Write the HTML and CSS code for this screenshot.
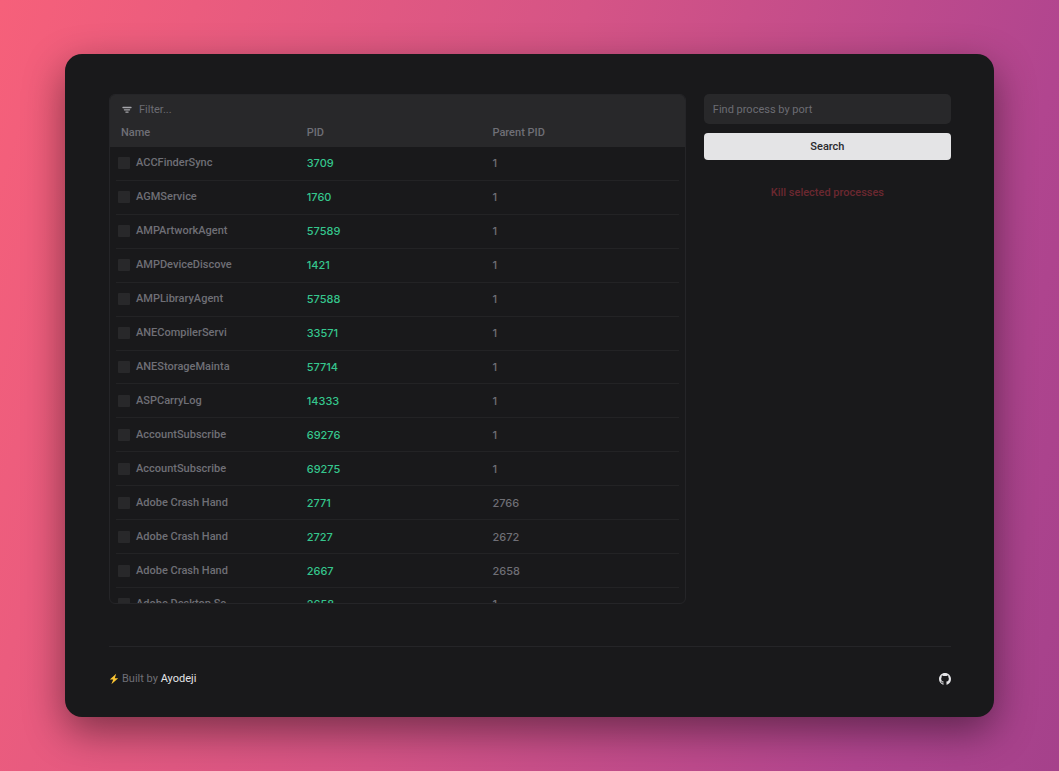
FILE: index.html
```html
<!DOCTYPE html>
<html lang="en">
<head>
<meta charset="utf-8">
<title>Processes</title>
<link rel="stylesheet" href="styles.css">
</head>
<body>
<main class="card">
  <div class="content">
    <section class="panel" aria-label="Processes">
      <div class="filter">
        <svg class="filter-icon" viewBox="0 0 10 8" aria-hidden="true"><path d="M1 1.5h8M2.4 3.8h5.2M3.9 6.1h2.2" stroke="currentColor" stroke-width="1.3" stroke-linecap="round"/></svg>
        <input class="filter-input" type="text" placeholder="Filter..." aria-label="Filter">
      </div>
      <table class="table">
        <thead><tr><th scope="col">Name</th><th scope="col">PID</th><th scope="col">Parent PID</th></tr></thead>
        <tbody>
          <tr><td><label class="name"><input class="check" type="checkbox">ACCFinderSync</label></td><td>3709</td><td>1</td></tr>
          <tr><td><label class="name"><input class="check" type="checkbox">AGMService</label></td><td>1760</td><td>1</td></tr>
          <tr><td><label class="name"><input class="check" type="checkbox">AMPArtworkAgent</label></td><td>57589</td><td>1</td></tr>
          <tr><td><label class="name"><input class="check" type="checkbox">AMPDeviceDiscove</label></td><td>1421</td><td>1</td></tr>
          <tr><td><label class="name"><input class="check" type="checkbox">AMPLibraryAgent</label></td><td>57588</td><td>1</td></tr>
          <tr><td><label class="name"><input class="check" type="checkbox">ANECompilerServi</label></td><td>33571</td><td>1</td></tr>
          <tr><td><label class="name"><input class="check" type="checkbox">ANEStorageMainta</label></td><td>57714</td><td>1</td></tr>
          <tr><td><label class="name"><input class="check" type="checkbox">ASPCarryLog</label></td><td>14333</td><td>1</td></tr>
          <tr><td><label class="name"><input class="check" type="checkbox">AccountSubscribe</label></td><td>69276</td><td>1</td></tr>
          <tr><td><label class="name"><input class="check" type="checkbox">AccountSubscribe</label></td><td>69275</td><td>1</td></tr>
          <tr><td><label class="name"><input class="check" type="checkbox">Adobe Crash Hand</label></td><td>2771</td><td>2766</td></tr>
          <tr><td><label class="name"><input class="check" type="checkbox">Adobe Crash Hand</label></td><td>2727</td><td>2672</td></tr>
          <tr><td><label class="name"><input class="check" type="checkbox">Adobe Crash Hand</label></td><td>2667</td><td>2658</td></tr>
          <tr><td><label class="name"><input class="check" type="checkbox">Adobe Desktop Se</label></td><td>2658</td><td>1</td></tr>
        </tbody>
      </table>
    </section>
    <aside class="side">
      <form class="search">
        <input class="port" type="text" placeholder="Find process by port" aria-label="Find process by port">
        <button class="search-button" type="button">Search</button>
      </form>
      <button class="kill" type="button">Kill selected processes</button>
    </aside>
  </div>
  <footer class="footer">
    <p class="credit"><svg class="bolt" viewBox="0 0 10 12" aria-hidden="true"><path d="M7.2 0.8L0.8 6.6h3.4L2.4 11.2l6.8-6H5.8z" fill="#fcc532"/></svg><span>Built by <a class="author" href="#">Ayodeji</a></span></p>
    <a class="github" href="#" aria-label="GitHub"><svg viewBox="0 0 16 16" aria-hidden="true"><path fill="currentColor" d="M8 0C3.58 0 0 3.58 0 8c0 3.54 2.29 6.53 5.47 7.59.4.07.55-.17.55-.38 0-.19-.01-.82-.01-1.49-2.01.37-2.53-.49-2.69-.94-.09-.23-.48-.94-.82-1.13-.28-.15-.68-.52-.01-.53.63-.01 1.08.58 1.23.82.72 1.21 1.87.87 2.33.66.07-.52.28-.87.51-1.07-1.78-.2-3.64-.89-3.64-3.95 0-.87.31-1.59.82-2.15-.08-.2-.36-1.02.08-2.12 0 0 .67-.21 2.2.82.64-.18 1.32-.27 2-.27s1.36.09 2 .27c1.53-1.04 2.2-.82 2.2-.82.44 1.1.16 1.92.08 2.12.51.56.82 1.27.82 2.15 0 3.07-1.87 3.75-3.65 3.95.29.25.54.73.54 1.48 0 1.07-.01 1.93-.01 2.2 0 .21.15.46.55.38A8.01 8.01 0 0 0 16 8c0-4.42-3.58-8-8-8z"/></svg></a>
  </footer>
</main>
</body>
</html>
```

FILE: styles.css
```css
* {
  box-sizing: border-box;
}

body {
  margin: 0;
  min-height: 100vh;
  padding: 54px 65px;
  background: linear-gradient(106deg, #f6607a 0%, #d55486 46%, #b1458f 84%, #a5418b 100%);
  color: #6f6f76;
  font: 500 11px/16px Roboto, "Liberation Sans", sans-serif;
}

input,
button {
  font: inherit;
  border: 0;
  margin: 0;
}

input::placeholder {
  color: #6c6c73;
  opacity: 1;
}

.card {
  padding: 40px 43px 30px 44px;
  border-radius: 17px;
  background: #19191b;
  box-shadow: 0 14px 40px rgba(0, 0, 0, 0.45);
}

.content {
  display: grid;
  grid-template-columns: 7fr 3fr;
  gap: 18px;
  align-items: start;
}

.panel {
  height: 510px;
  padding: 0 6px;
  overflow: hidden;
  border: 1px solid #252528;
  border-radius: 6px;
}

.filter {
  display: flex;
  align-items: center;
  gap: 7px;
  margin: 0 -6px;
  padding: 7px 12px 0;
  background: #28282a;
}

.filter-icon {
  width: 10px;
  height: 8px;
  color: #a5a5aa;
}

.filter-input {
  flex: 1;
  height: 16px;
  padding: 0;
  background: transparent;
  color: #d4d4d8;
  font-weight: 400;
}

.table {
  width: 100%;
  height: 504px;
  table-layout: fixed;
  border-collapse: separate;
  border-spacing: 0;
}

th {
  width: 33%;
  height: 29px;
  padding: 0 5px;
  background: #28282a;
  font-weight: 500;
  text-align: left;
}

th:first-child {
  box-shadow: -6px 0 #28282a;
}

th:last-child {
  width: 34%;
  box-shadow: 6px 0 #28282a;
}

td {
  padding: 0 5px;
  border-bottom: 1px solid #232325;
  font-family: Inter, "Liberation Sans", sans-serif;
}

td:first-child {
  padding-left: 2px;
  font-family: inherit;
}

td:nth-child(2) {
  color: #35c68d;
}

.name {
  display: flex;
  align-items: center;
  gap: 6px;
}

.check {
  appearance: none;
  width: 12px;
  height: 12px;
  border-radius: 1px;
  background: #28282a;
}

.check:checked {
  background: #35c68d;
}

.side,
.search {
  display: flex;
  flex-direction: column;
}

.side {
  gap: 20px;
}

.search {
  gap: 9px;
}

.port {
  width: 100%;
  height: 30px;
  padding: 0 9px;
  border-radius: 5px;
  background: #28282a;
  color: #d4d4d8;
  font-weight: 400;
}

.search-button {
  height: 27px;
  border-radius: 4px;
  background: #e4e4e6;
  color: #29292c;
}

.kill {
  height: 26px;
  background: transparent;
  color: #6b2830;
}

.footer {
  display: flex;
  align-items: center;
  justify-content: space-between;
  margin-top: 42px;
  padding-top: 24px;
  border-top: 1px solid #252528;
}

.credit {
  display: flex;
  align-items: center;
  gap: 3px;
  margin: 0;
  font-weight: 400;
}

.bolt {
  width: 10px;
  height: 12px;
}

.author {
  color: #e4e4e7;
  text-decoration: none;
}

.github {
  display: flex;
  width: 12px;
  height: 12px;
  color: #e4e4e7;
}

.github svg {
  width: 100%;
}
```
